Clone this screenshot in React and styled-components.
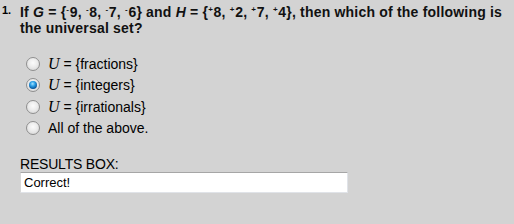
import React from "react";
import styled, { createGlobalStyle } from "styled-components";

const Global = createGlobalStyle`
  html, body { margin: 0; padding: 0; background: #d3d3d3; }
  body { font-family: "Liberation Sans", Arial, sans-serif; color: #000; }
`;

const Page = styled.div`
  width: 514px;
  height: 224px;
  background: #d3d3d3;
  padding: 4px 0 0 2px;
  box-sizing: border-box;
`;

const QuestionRow = styled.div`
  display: flex;
  align-items: flex-start;
`;

const Number = styled.div`
  width: 18px;
  font-size: 11px;
  font-weight: bold;
  line-height: 12px;
  flex: none;
`;

const Question = styled.div`
  font-size: 14px;
  font-weight: bold;
  line-height: 16px;
  letter-spacing: 0.2px;
  color: #111;
`;

const Sup = styled.sup`
  font-size: 8px;
  line-height: 0;
  vertical-align: 5px;
  margin-right: 0.5px;
`;

const Options = styled.div`
  display: flex;
  flex-direction: column;
  padding: 17px 0 0 24px;
`;

const Option = styled.label`
  display: flex;
  align-items: center;
  height: 21.5px;
  font-size: 14px;
  gap: 8px;
`;

const OptionText = styled.span`
  white-space: pre;
`;

const Radio = styled.span`
  width: 14px;
  height: 14px;
  box-sizing: border-box;
  border-radius: 50%;
  border: 1px solid #8f8f8f;
  background: radial-gradient(circle at 50% 40%, #fbfbfb 0%, #ececec 45%, #d0d0d0 100%);
  display: flex;
  align-items: center;
  justify-content: center;
  flex: none;
  &::after {
    content: "";
    display: ${(p) => (p.$checked ? "block" : "none")};
    width: 8px;
    height: 8px;
    border-radius: 50%;
    background: radial-gradient(circle at 45% 35%, #a6e2ff 0%, #2a9fe6 35%, #0b5aa0 70%, #052e58 100%);
  }
`;

const MathU = styled.i`
  font-family: "Liberation Serif", "Times New Roman", serif;
  font-size: 16px;
`;

const ResultsLabel = styled.div`
  font-size: 14px;
  letter-spacing: -0.2px;
  padding: 17px 0 0 18px;
  line-height: 16px;
`;

const ResultsBox = styled.div`
  margin: 0 0 0 18px;
  width: 328px;
  height: 21px;
  box-sizing: border-box;
  background: #fff;
  border: 1px solid #e0e3e8;
  border-top-color: #a6a6a6;
  border-left-color: #d8d8d8;
  font-size: 13px;
  padding: 2px 3px;
  line-height: 15px;
`;

const options = [
  { math: true, text: " = {fractions}" },
  { math: true, text: " = {integers}", checked: true },
  { math: true, text: " = {irrationals}" },
  { math: false, text: "All of the above." },
];

export default function App() {
  return (
    <>
      <Global />
      <Page>
        <QuestionRow>
          <Number>1.</Number>
          <Question>
            If <i>G</i> = {"{"}<Sup>-</Sup>9, <Sup>-</Sup>8, <Sup>-</Sup>7, <Sup>-</Sup>6{"}"} and <i>H</i> = {"{"}
            <Sup>+</Sup>8, <Sup>+</Sup>2, <Sup>+</Sup>7, <Sup>+</Sup>4{"}"}, then which of the following is
            <br />
            the universal set?
          </Question>
        </QuestionRow>
        <Options>
          {options.map((o, i) => (
            <Option key={i}>
              <Radio $checked={o.checked} />
              <OptionText>
                {o.math && <MathU>U</MathU>}
                {o.text}
              </OptionText>
            </Option>
          ))}
        </Options>
        <ResultsLabel>RESULTS BOX:</ResultsLabel>
        <ResultsBox>Correct!</ResultsBox>
      </Page>
    </>
  );
}
